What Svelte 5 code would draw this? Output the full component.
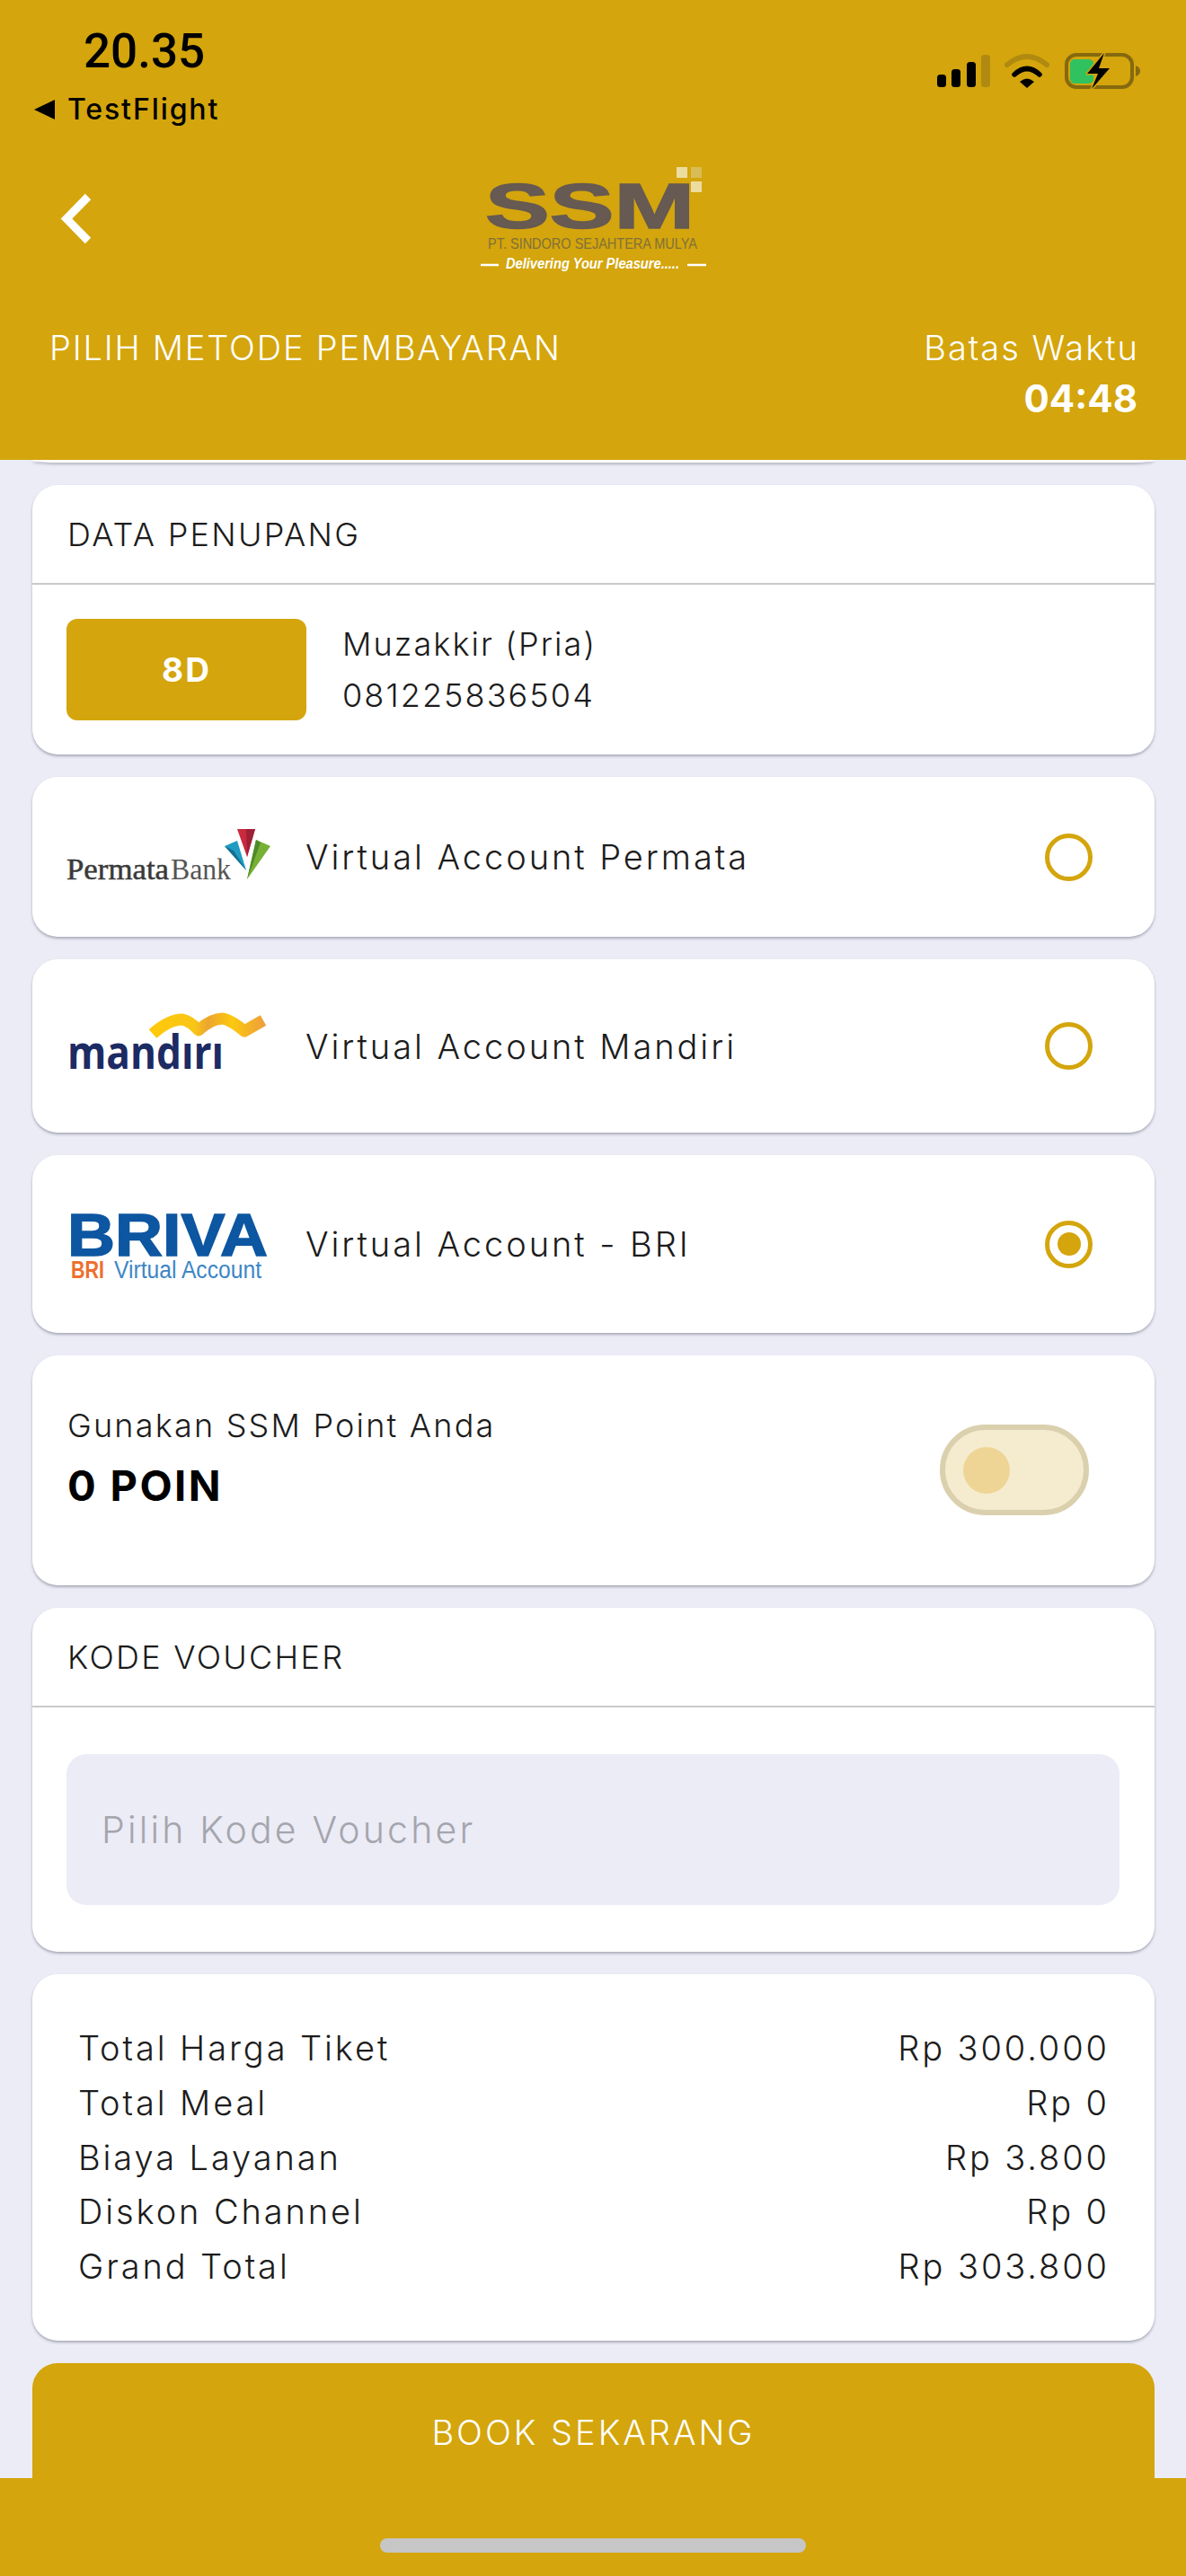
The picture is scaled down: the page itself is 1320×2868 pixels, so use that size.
<script>
    const totals = [
        ['Total Harga Tiket', 'Rp 300.000'],
        ['Total Meal', 'Rp 0'],
        ['Biaya Layanan', 'Rp 3.800'],
        ['Diskon Channel', 'Rp 0'],
        ['Grand Total', 'Rp 303.800']
    ]
</script>

<div class="page">
    <header class="header">
        <div class="status">
            <div class="status-left">
                <div class="time">20.35</div>
                <div class="back-app"><span class="tri"></span>TestFlight</div>
            </div>
            <svg class="status-icons" viewBox="1040 55 232 48" width="232" height="48">
                <rect x="1043" y="83" width="10" height="14" rx="3.5" fill="#000" />
                <rect x="1059" y="77" width="10" height="20" rx="3.5" fill="#000" />
                <rect x="1076" y="69" width="10" height="28" rx="3.5" fill="#000" />
                <rect x="1092" y="61" width="10" height="36" rx="3.5" fill="#b08a10" />
                <path d="M1121 72 Q1143 54 1165 72" fill="none" stroke="#b08a10" stroke-width="6" stroke-linecap="round" />
                <path d="M1129 83 Q1143 70 1157 83" fill="none" stroke="#000" stroke-width="5.5" stroke-linecap="round" />
                <path d="M1135 91 Q1143 84 1151 91 L1143 98 Z" fill="#000" />
                <rect x="1187" y="61" width="73" height="36" rx="11" fill="none" stroke="#86690f" stroke-width="4" />
                <path d="M1264 73 Q1269 75 1269 79 Q1269 83 1264 85 Z" fill="#86690f" />
                <rect x="1191" y="66" width="26" height="27" rx="5" fill="#2fc25f" />
                <path d="M1229 59 L1210 82 L1222 82 L1215 99 L1235 76 L1223 76 Z" fill="#000" stroke="#d4a50c" stroke-width="3" paint-order="stroke" stroke-linejoin="round" />
            </svg>
        </div>

        <div class="nav">
            <svg class="chevron" viewBox="66 212 40 64" width="40" height="64">
                <path d="M98 219 L74 243.500 L98 268" fill="none" stroke="#fff" stroke-width="9" />
            </svg>
            <svg class="logo" viewBox="528 195 264 115" width="264" height="115">
                <rect x="753" y="186" width="12" height="12" fill="#ecdca0" />
                <rect x="769" y="186" width="12" height="12" fill="#d9bc55" />
                <rect x="769" y="202" width="12" height="12" fill="#ecdca0" />
                <text class="ssm" x="540" y="254" textLength="233" lengthAdjust="spacingAndGlyphs">SSM</text>
                <text class="pt" x="543" y="277" textLength="233" lengthAdjust="spacingAndGlyphs">PT. SINDORO SEJAHTERA MULYA</text>
                <text class="deliver" x="563" y="299" textLength="193" lengthAdjust="spacingAndGlyphs">Delivering Your Pleasure.....</text>
                <path d="M535 295 H555 M765 295 H786" stroke="#fff" stroke-width="2.500" />
            </svg>
        </div>

        <div class="title-row">
            <div class="title">PILIH METODE PEMBAYARAN</div>
            <div class="timer">
                <div class="timer-label">Batas Waktu</div>
                <div class="timer-value">04:48</div>
            </div>
        </div>
    </header>

    <main class="content">
        <div class="peek"></div>

        <section class="card">
            <div class="card-title">DATA PENUPANG</div>
            <div class="passenger">
                <div class="seat">8D</div>
                <div class="person">
                    <div>Muzakkir (Pria)</div>
                    <div>081225836504</div>
                </div>
            </div>
        </section>

        <section class="card method permata">
            <svg class="bank" viewBox="74 865 230 178" width="230" height="178">
                <text class="perm-a" x="74" y="979" textLength="114" lengthAdjust="spacingAndGlyphs">Permata</text>
                <text class="perm-b" x="190" y="979" textLength="67" lengthAdjust="spacingAndGlyphs">Bank</text>
                <polygon points="264,923 284,923 275,954" fill="#c92a3e" />
                <polygon points="274,923 284,923 275,954" fill="#9e2036" />
                <polygon points="250,942 264,936 274,969" fill="#1f9cc2" />
                <polygon points="250,942 274,969 260,947" fill="#14708f" />
                <polygon points="285,935 301,942 275,979" fill="#76b034" />
                <polygon points="285,935 290,938 275,979" fill="#4f8a2a" />
            </svg>
            <div class="method-name">Virtual Account Permata</div>
            <div class="radio"></div>
        </section>

        <section class="card method mandiri">
            <svg class="bank" viewBox="74 1068 230 193" width="230" height="193">
                <defs>
                    <linearGradient id="ribbon" x1="0" y1="0" x2="1" y2="0">
                        <stop offset="0" stop-color="#ffc90a" />
                        <stop offset="0.38" stop-color="#f9c516" />
                        <stop offset="0.5" stop-color="#eda52f" />
                        <stop offset="0.72" stop-color="#fcc80e" />
                        <stop offset="1" stop-color="#eea03a" />
                    </linearGradient>
                </defs>
                <path d="M170 1151 Q188 1135 203 1135 Q212 1137 221 1147 Q235 1134 248 1134 Q258 1136 272 1148 L293 1136" fill="none" stroke="url(#ribbon)" stroke-width="13" stroke-linejoin="round" />
                <text class="mandiri-word" x="75" y="1190" textLength="174" lengthAdjust="spacingAndGlyphs">mandırı</text>
            </svg>
            <div class="method-name">Virtual Account Mandiri</div>
            <div class="radio"></div>
        </section>

        <section class="card method bri">
            <svg class="bank" viewBox="74 1286 230 198" width="230" height="198">
                <text class="briva" x="75" y="1398" textLength="223" lengthAdjust="spacingAndGlyphs">BRIVA</text>
                <text class="bri-a" x="79" y="1423" textLength="37" lengthAdjust="spacingAndGlyphs">BRI</text>
                <text class="bri-b" x="127" y="1423" textLength="164" lengthAdjust="spacingAndGlyphs">Virtual Account</text>
            </svg>
            <div class="method-name">Virtual Account - BRI</div>
            <div class="radio on"></div>
        </section>

        <section class="card point">
            <div>
                <div class="point-label">Gunakan SSM Point Anda</div>
                <div class="point-value">0 POIN</div>
            </div>
            <div class="toggle"><span class="knob"></span></div>
        </section>

        <section class="card voucher">
            <div class="card-title">KODE VOUCHER</div>
            <div class="voucher-input">Pilih Kode Voucher</div>
        </section>

        <section class="card totals">
            {#each totals as row}
                <div class="total-row">
                    <span>{row[0]}</span>
                    <span>{row[1]}</span>
                </div>
            {/each}
        </section>

        <div class="book">BOOK SEKARANG</div>
    </main>

    <footer class="footer">
        <div class="home"></div>
    </footer>
</div>

<style>
    :global(body) {
        margin: 0;
        background: #ebecf6;
    }

    .page {
        width: 1320px;
        height: 2868px;
        overflow: hidden;
        display: flex;
        flex-direction: column;
        font-family: Inter, Roboto, sans-serif;
        font-weight: 300;
        color: #1c1c1c;
        background: #ebecf6;
    }

    .header {
        height: 512px;
        flex: none;
        background: #d4a50c;
        color: #fff;
    }

    .status {
        height: 195px;
        display: flex;
        justify-content: space-between;
        align-items: flex-start;
        box-sizing: border-box;
        padding: 27px 48px 0 38px;
    }

    .time {
        margin-left: 55px;
        font: 500 53px/60px Roboto, sans-serif;
        color: #000;
    }

    .back-app {
        margin-top: 15px;
        display: flex;
        align-items: center;
        font: 500 32px/40px Inter, sans-serif;
        letter-spacing: 1.900px;
        color: #000;
    }

    .tri {
        width: 0;
        height: 0;
        margin-right: 14px;
        border-style: solid;
        border-width: 11px 23px 11px 0;
        border-color: transparent #000 transparent transparent;
    }

    .status-icons {
        margin-top: 28px;
    }

    .nav {
        height: 115px;
        display: grid;
        grid-template-columns: 1fr auto 1fr;
    }

    .chevron {
        margin: 17px 0 0 66px;
    }

    .logo {
        overflow: visible;
        grid-column: 2;
    }

    .ssm {
        font: bold 70px "Liberation Sans", sans-serif;
        fill: #665a52;
        stroke: #665a52;
        stroke-width: 1.500px;
    }

    .pt {
        font: 17px "Liberation Sans", sans-serif;
        fill: #80703a;
    }

    .deliver {
        font: italic bold 16px "Liberation Sans", sans-serif;
        fill: #fff;
    }

    .title-row {
        display: flex;
        justify-content: space-between;
        padding: 53px 54px 0 55px;
    }

    .title {
        font-size: 38px;
        line-height: 48px;
        letter-spacing: 1.800px;
    }

    .timer {
        text-align: right;
    }

    .timer-label {
        margin-right: -2px;
        font-size: 38px;
        line-height: 48px;
        letter-spacing: 2px;
    }

    .timer-value {
        margin-top: 7px;
        font-size: 42px;
        line-height: 52px;
        font-weight: 700;
    }

    .content {
        flex: 1;
        display: flex;
        flex-direction: column;
        gap: 25px;
        padding: 0 35px 0 36px;
    }

    .peek {
        height: 3px;
        flex: none;
        background: #fff;
        border-radius: 0 0 28px 28px / 0 0 3px 3px;
        box-shadow: 0 2px 3px rgba(90, 90, 110, 0.4);
    }

    .card {
        flex: none;
        box-sizing: border-box;
        background: #fff;
        border-radius: 28px;
        box-shadow: 0 2px 3px rgba(90, 90, 110, 0.45);
    }

    .card-title {
        box-sizing: border-box;
        height: 111px;
        padding: 0 39px;
        display: flex;
        align-items: center;
        font-size: 36px;
        letter-spacing: 2.300px;
        border-bottom: 2px solid #c9c9cd;
    }

    .passenger {
        height: 189px;
        box-sizing: border-box;
        padding: 38px 38px 0;
        display: flex;
        align-items: flex-start;
    }

    .seat {
        width: 267px;
        height: 113px;
        display: flex;
        align-items: center;
        justify-content: center;
        background: #d4a50c;
        border-radius: 12px;
        color: #fff;
        font-size: 37px;
        font-weight: 700;
        letter-spacing: 2px;
    }

    .person {
        margin: 0 0 0 40px;
        font-size: 36px;
        line-height: 57px;
        letter-spacing: 2.100px;
    }

    .method {
        display: flex;
        align-items: center;
        padding-left: 38px;
        padding-right: 69px;
    }

    .permata { height: 178px; }
    .mandiri { height: 193px; }
    .bri { height: 198px; }

    .bank {
        flex: none;
    }

    .perm-a {
        font: 33px "Liberation Serif", serif;
        fill: #3a3a3a;
        stroke: #3a3a3a;
        stroke-width: 0.500px;
    }

    .perm-b {
        font: 33px "Liberation Serif", serif;
        fill: #555;
    }

    .mandiri-word {
        font: bold 52px "Open Sans", sans-serif;
        fill: #1c2b63;
    }

    .briva {
        font: bold 66px "Liberation Sans", sans-serif;
        fill: #0d56a1;
        stroke: #0d56a1;
        stroke-width: 1.500px;
    }

    .bri-a {
        font: bold 27px "Liberation Sans", sans-serif;
        fill: #ee6f2d;
    }

    .bri-b {
        font: 27px "Liberation Sans", sans-serif;
        fill: #3d86c6;
    }

    .method-name {
        margin-left: 36px;
        font-size: 38px;
        letter-spacing: 2.950px;
    }

    .radio {
        margin-left: auto;
        width: 53px;
        height: 53px;
        box-sizing: border-box;
        border: 5px solid #d4a50c;
        border-radius: 50%;
        display: flex;
        align-items: center;
        justify-content: center;
    }

    .radio.on::after {
        content: "";
        width: 26px;
        height: 26px;
        border-radius: 50%;
        background: #d4a50c;
    }

    .point {
        height: 256px;
        display: flex;
        justify-content: space-between;
        align-items: flex-start;
        padding: 50px 73px 0 39px;
    }

    .point-label {
        font-size: 36px;
        line-height: 56px;
        letter-spacing: 2.200px;
    }

    .point-value {
        margin-top: 11px;
        font-size: 47px;
        line-height: 56px;
        font-weight: 700;
        letter-spacing: 2.400px;
        color: #000;
    }

    .toggle {
        width: 166px;
        height: 101px;
        margin-top: 27px;
        box-sizing: border-box;
        padding: 0 20px;
        display: flex;
        align-items: center;
        background: #f5ecd0;
        border: 6px solid #dbd0ae;
        border-radius: 51px;
    }

    .knob {
        width: 52px;
        height: 52px;
        border-radius: 50%;
        background: #eed595;
    }

    .voucher {
        height: 383px;
    }

    .voucher-input {
        height: 168px;
        margin: 52px 39px 0 38px;
        box-sizing: border-box;
        padding: 0 39px;
        display: flex;
        align-items: center;
        background: #ebecf6;
        border-radius: 22px;
        color: #a5a5ad;
        font-size: 41px;
        letter-spacing: 3.200px;
    }

    .totals {
        height: 408px;
        padding: 52px 50px 0 51px;
    }

    .total-row {
        display: flex;
        justify-content: space-between;
        height: 60.700px;
        align-items: center;
        font-size: 38px;
        letter-spacing: 2.900px;
    }

    .book {
        height: 128px;
        flex: none;
        box-sizing: border-box;
        padding-top: 53px;
        text-align: center;
        line-height: 48px;
        background: #d4a50c;
        border-radius: 28px 28px 0 0;
        color: #fff;
        font-size: 38px;
        letter-spacing: 3px;
    }

    .footer {
        height: 109px;
        flex: none;
        box-sizing: border-box;
        padding-top: 67px;
        background: #d4a50c;
    }

    .home {
        width: 474px;
        height: 16px;
        margin: 0 auto;
        border-radius: 8px;
        background: #c6c6c6;
    }
</style>
